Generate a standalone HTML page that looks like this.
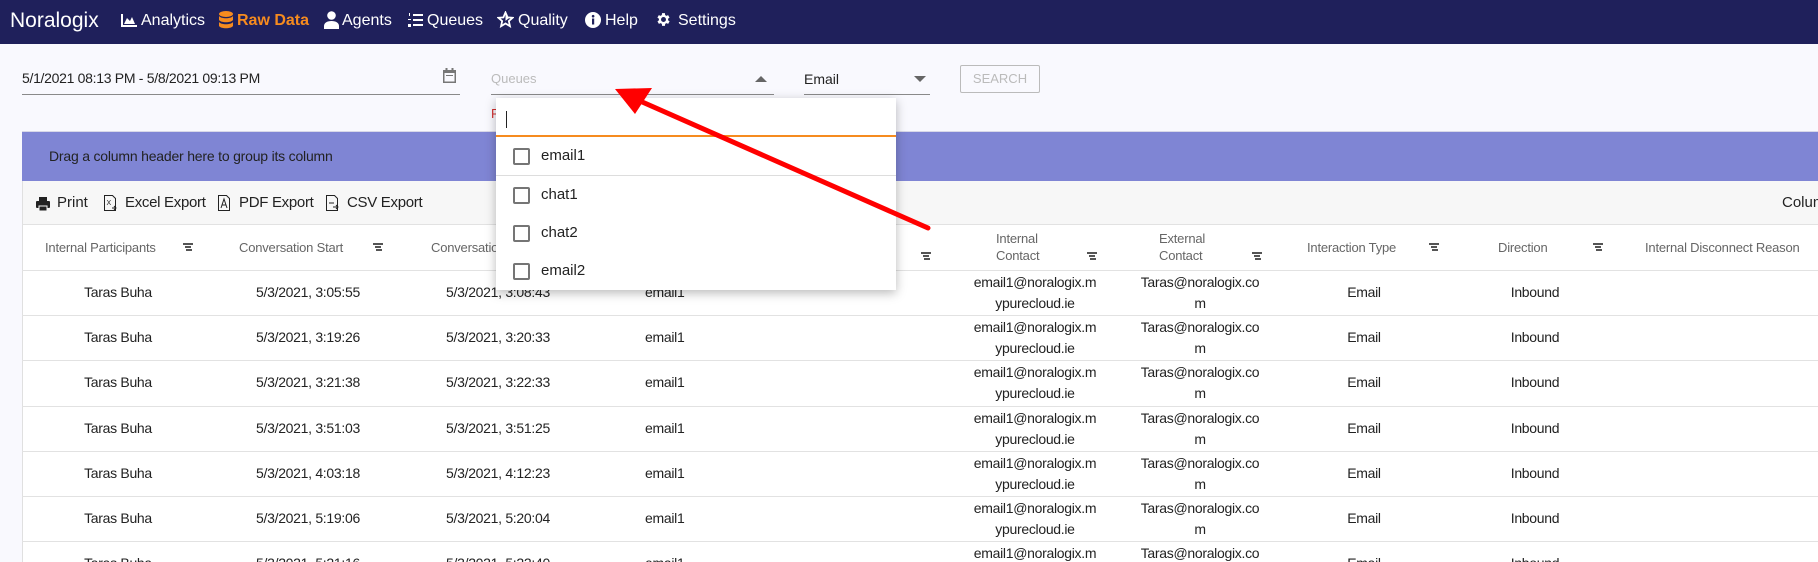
<!DOCTYPE html>
<html style="width:1818px;height:562px;overflow:hidden"><head><meta charset="utf-8"><style>
*{box-sizing:border-box;margin:0;padding:0}
body{width:1818px;height:562px;overflow:hidden;background:#f9f9fe;font-family:"Liberation Sans",sans-serif;position:relative;color:#212121}
.a{position:absolute;white-space:nowrap}
.nav{position:absolute;left:0;top:0;width:1818px;height:44px;background:#1f205b;color:#fff}
.nav .a{top:11px;font-size:16px;line-height:20px}
.ul{position:absolute;height:1px;background:#8a8a8a}
.th{position:absolute;font-size:13px;color:#666;line-height:17px;letter-spacing:-0.2px}
.fl{position:absolute;width:10px;height:7px}
.fl:before{content:"";position:absolute;left:0;top:0;width:10px;height:1.5px;background:#555}
.fl:after{content:"";position:absolute;left:2px;top:3px;width:6px;height:1.5px;background:#555;box-shadow:1px 3px 0 -0px #555}
.td{position:absolute;font-size:14px;line-height:21px;color:#222;text-align:center;letter-spacing:-0.3px}
.hr{position:absolute;left:22px;width:1796px;height:1px;background:#e2e2e2}
.cb{position:absolute;left:17px;width:17px;height:17px;border:2px solid #757575;border-radius:2px}
.it{position:absolute;left:45px;font-size:15px;color:#222}
.tb{position:absolute;top:194px;font-size:15px;color:#222}
#clip{position:absolute;left:0;top:0;width:1818px;height:562px;overflow:hidden}
</style></head><body><div id="clip">
<div class="nav">
 <div class="a" style="left:10px;top:9px;font-size:21px;line-height:24px">Noralogix</div>
 <svg class="a" style="left:120px;top:14px" width="17" height="14" viewBox="0 0 17 14"><path d="M1 0v13h16v-2H3V0z M4 10l3-6 3 3 2-4 3 7z" fill="#fff"/></svg>
 <div class="a" style="left:141px">Analytics</div>
 <svg class="a" style="left:219px;top:11px" width="14" height="19" viewBox="0 0 14 19"><ellipse cx="7" cy="3" rx="7" ry="3" fill="#f68b1f"/><path d="M0 5c2 3 12 3 14 0v4c-2 3-12 3-14 0zM0 11c2 3 12 3 14 0v4c-2 3-12 3-14 0z" fill="#f68b1f"/></svg>
 <div class="a" style="left:237px;color:#f68b1f;font-weight:bold">Raw Data</div>
 <svg class="a" style="left:324px;top:11px" width="15" height="18" viewBox="0 0 15 18"><circle cx="7.5" cy="4.5" r="4.3" fill="#fff"/><path d="M0 18v-3c0-3 3-5 7.5-5s7.5 2 7.5 5v3z" fill="#fff"/></svg>
 <div class="a" style="left:342px">Agents</div>
 <svg class="a" style="left:408px;top:12px" width="15" height="16" viewBox="0 0 15 16"><path d="M1 1h1v3H1zM0 7h3v1H0zM0 12h3v3H0z" fill="#fff"/><path d="M5 2h10v2H5zM5 7h10v2H5zM5 12h10v2H5z" fill="#fff"/></svg>
 <div class="a" style="left:427px">Queues</div>
 <svg class="a" style="left:497px;top:11px" width="17" height="17" viewBox="0 0 24 24"><path d="M12 2l3 7 7 .6-5.3 4.6 1.6 7.3L12 17.6 5.7 21.5l1.6-7.3L2 9.6 9 9z" fill="none" stroke="#fff" stroke-width="2.5"/><path d="M12 2l3 7 2 1-5 4z" fill="#fff"/></svg>
 <div class="a" style="left:518px">Quality</div>
 <svg class="a" style="left:585px;top:12px" width="16" height="16" viewBox="0 0 16 16"><circle cx="8" cy="8" r="8" fill="#fff"/><rect x="7" y="6.5" width="2.2" height="6" fill="#1f205b"/><circle cx="8.1" cy="4.2" r="1.3" fill="#1f205b"/></svg>
 <div class="a" style="left:605px">Help</div>
 <svg class="a" style="left:655px;top:11px" width="17" height="17" viewBox="0 0 24 24"><path fill="#fff" d="M19.4 13a7.5 7.5 0 000-2l2.1-1.6-2-3.5-2.5 1a7 7 0 00-1.7-1L15 3h-4l-.4 2.9a7 7 0 00-1.7 1l-2.5-1-2 3.5L6.6 11a7.5 7.5 0 000 2l-2.1 1.6 2 3.5 2.5-1a7 7 0 001.7 1L11 21h4l.4-2.9a7 7 0 001.7-1l2.5 1 2-3.5zM13 15.5a3.5 3.5 0 110-7 3.5 3.5 0 010 7z" transform="translate(-1 0)"/></svg>
 <div class="a" style="left:678px">Settings</div>
</div>

<div class="a" style="left:22px;top:70px;font-size:14px;color:#222;letter-spacing:-0.3px">5/1/2021 08:13 PM - 5/8/2021 09:13 PM</div>
<svg class="a" style="left:443px;top:68px" width="13" height="15" viewBox="0 0 13 15"><path d="M0 2h13v13H0z" fill="#777"/><rect x="1.5" y="5" width="10" height="8.5" fill="#f9f9fe"/><rect x="2.5" y="0" width="2" height="3" fill="#777"/><rect x="8.5" y="0" width="2" height="3" fill="#777"/><rect x="3" y="7" width="7" height="1" fill="#777"/></svg>
<div class="ul" style="left:22px;top:94px;width:438px"></div>
<div class="a" style="left:491px;top:71px;font-size:13px;color:#bbb">Queues</div>
<div class="a" style="left:755px;top:76px;width:0;height:0;border-left:6px solid transparent;border-right:6px solid transparent;border-bottom:6px solid #666"></div>
<div class="ul" style="left:491px;top:94px;width:283px"></div>
<div class="a" style="left:804px;top:71px;font-size:14px;color:#222">Email</div>
<div class="a" style="left:914px;top:76px;width:0;height:0;border-left:6px solid transparent;border-right:6px solid transparent;border-top:6px solid #666"></div>
<div class="ul" style="left:804px;top:94px;width:126px"></div>
<div class="a" style="left:960px;top:65px;width:80px;height:28px;border:1px solid #bbb;border-radius:2px;font-size:13px;color:#bbb;text-align:center;line-height:26px">SEARCH</div>
<div class="a" style="left:491px;top:106px;font-size:13px;color:#d32f2f">P</div>

<div class="a" style="left:22px;top:131px;width:1796px;height:50px;background:#7f85d4;border-top:1px solid #d8d8e8"></div>
<div class="a" style="left:49px;top:148px;font-size:14px;color:#222;letter-spacing:-0.2px">Drag a column header here to group its column</div>
<div class="a" style="left:22px;top:181px;width:1796px;height:43px;background:#f7f7f7;border-left:1px solid #e0e0e0"></div>
<svg class="a" style="left:36px;top:197px" width="14" height="14" viewBox="0 0 14 14"><rect x="3" y="0" width="8" height="4" fill="#222"/><rect x="0" y="4" width="14" height="7" rx="1" fill="#222"/><rect x="3" y="9" width="8" height="5" fill="#222" stroke="#f7f7f7" stroke-width="1"/></svg>
<div class="tb" style="left:57px">Print</div>
<svg class="a" style="left:104px;top:195px" width="13" height="17" viewBox="0 0 13 17"><path d="M.5.5h8l3 3v12H.5z" fill="none" stroke="#222"/><text x="2.5" y="10" font-size="7" font-family="Liberation Sans" fill="#222">X</text><path d="M8 13h4M10 11l2 2-2 2" stroke="#222" fill="none"/></svg>
<div class="tb" style="left:125px;letter-spacing:-0.3px">Excel Export</div>
<svg class="a" style="left:218px;top:195px" width="13" height="17" viewBox="0 0 13 17"><path d="M.5.5h8l3 3v12H.5z" fill="none" stroke="#222"/><path d="M3 13l3-9 3 9M4 10h4" stroke="#222" fill="none"/></svg>
<div class="tb" style="left:239px;letter-spacing:-0.3px">PDF Export</div>
<svg class="a" style="left:326px;top:195px" width="13" height="17" viewBox="0 0 13 17"><path d="M.5.5h8l3 3v12H.5z" fill="none" stroke="#222"/><path d="M3 8h5M7 12h5M10 10l2 2-2 2" stroke="#222" fill="none"/></svg>
<div class="tb" style="left:347px;letter-spacing:-0.3px">CSV Export</div>
<div class="tb" style="left:1782px">Columns</div>

<div class="a" style="left:22px;top:224px;width:1796px;height:338px;background:#fff;border-left:1px solid #e0e0e0;border-top:1px solid #e2e2e2"></div>
<div class="th" style="left:45px;top:239px">Internal Participants</div><div class="fl" style="left:183px;top:243px"></div>
<div class="th" style="left:239px;top:239px">Conversation Start</div><div class="fl" style="left:373px;top:243px"></div>
<div class="th" style="left:431px;top:239px">Conversation End</div>
<div class="fl" style="left:921px;top:252px"></div>
<div class="th" style="left:996px;top:230px">Internal<br>Contact</div><div class="fl" style="left:1087px;top:252px"></div>
<div class="th" style="left:1159px;top:230px">External<br>Contact</div><div class="fl" style="left:1252px;top:252px"></div>
<div class="th" style="left:1307px;top:239px">Interaction Type</div><div class="fl" style="left:1429px;top:243px"></div>
<div class="th" style="left:1498px;top:239px">Direction</div><div class="fl" style="left:1593px;top:243px"></div>
<div class="th" style="left:1645px;top:239px">Internal Disconnect Reason</div>

<div id="rows"></div>
<script>
var d=[["3:05:55","3:08:43"],["3:19:26","3:20:33"],["3:21:38","3:22:33"],["3:51:03","3:51:25"],["4:03:18","4:12:23"],["5:19:06","5:20:04"],["5:21:16","5:22:40"]];
var h="";
for(var i=0;i<7;i++){var t=270+i*45.2;
h+='<div class="hr" style="top:'+Math.round(t)+'px"></div>';
var c=Math.round(t+12);
h+='<div class="td" style="left:56px;width:124px;top:'+c+'px">Taras Buha</div>';
h+='<div class="td" style="left:238px;width:140px;top:'+c+'px">5/3/2021, '+d[i][0]+'</div>';
h+='<div class="td" style="left:428px;width:140px;top:'+c+'px">5/3/2021, '+d[i][1]+'</div>';
h+='<div class="td" style="left:645px;top:'+c+'px;text-align:left">email1</div>';
h+='<div class="td" style="left:970px;width:130px;top:'+Math.round(t+2)+'px">email1@noralogix.m<br>ypurecloud.ie</div>';
h+='<div class="td" style="left:1135px;width:130px;top:'+Math.round(t+2)+'px">Taras@noralogix.co<br>m</div>';
h+='<div class="td" style="left:1334px;width:60px;top:'+c+'px">Email</div>';
h+='<div class="td" style="left:1500px;width:70px;top:'+c+'px">Inbound</div>';}
document.getElementById("rows").innerHTML=h;
</script>

<div class="a" style="left:496px;top:98px;width:400px;height:192px;background:#fff;box-shadow:0 3px 10px rgba(0,0,0,.28)">
 <div class="a" style="left:10px;top:13px;width:1px;height:17px;background:#222"></div>
 <div class="a" style="left:0;top:37px;width:400px;height:2px;background:#f68b1f"></div>
 <div class="cb" style="top:50px"></div><div class="it" style="top:49px">email1</div>
 <div class="a" style="left:0;top:77px;width:400px;height:1px;background:#ddd"></div>
 <div class="cb" style="top:89px"></div><div class="it" style="top:88px">chat1</div>
 <div class="cb" style="top:127px"></div><div class="it" style="top:126px">chat2</div>
 <div class="cb" style="top:165px"></div><div class="it" style="top:164px">email2</div>
</div>

<svg class="a" style="left:0;top:0" width="1818" height="562"><line x1="928" y1="228" x2="640" y2="101" stroke="#f00" stroke-width="5" stroke-linecap="round"/><path d="M615 89 L652 88 L635 114 Z" fill="#f00"/></svg>
</div></body></html>
